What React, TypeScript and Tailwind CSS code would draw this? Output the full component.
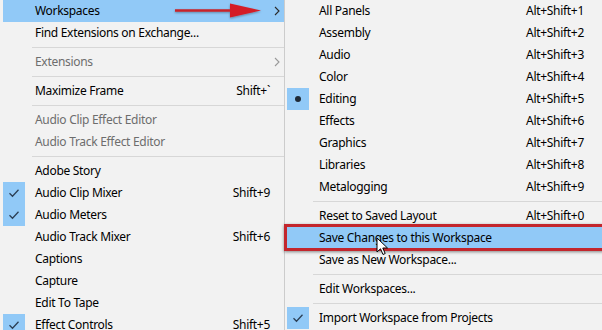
import React from "react";

type Item =
  | { sep: true }
  | {
      sep?: false;
      label: string;
      shortcut?: string;
      disabled?: boolean;
      check?: boolean;
      bullet?: boolean;
      sub?: boolean;
      hl?: boolean;
    };

const left: Item[] = [
  { label: "Workspaces", sub: true, hl: true },
  { label: "Find Extensions on Exchange..." },
  { sep: true },
  { label: "Extensions", sub: true, disabled: true },
  { sep: true },
  { label: "Maximize Frame", shortcut: "Shift+`" },
  { sep: true },
  { label: "Audio Clip Effect Editor", disabled: true },
  { label: "Audio Track Effect Editor", disabled: true },
  { sep: true },
  { label: "Adobe Story" },
  { label: "Audio Clip Mixer", shortcut: "Shift+9", check: true },
  { label: "Audio Meters", check: true },
  { label: "Audio Track Mixer", shortcut: "Shift+6" },
  { label: "Captions" },
  { label: "Capture" },
  { label: "Edit To Tape" },
  { label: "Effect Controls", shortcut: "Shift+5", check: true },
];

const right: Item[] = [
  { label: "All Panels", shortcut: "Alt+Shift+1" },
  { label: "Assembly", shortcut: "Alt+Shift+2" },
  { label: "Audio", shortcut: "Alt+Shift+3" },
  { label: "Color", shortcut: "Alt+Shift+4" },
  { label: "Editing", shortcut: "Alt+Shift+5", bullet: true },
  { label: "Effects", shortcut: "Alt+Shift+6" },
  { label: "Graphics", shortcut: "Alt+Shift+7" },
  { label: "Libraries", shortcut: "Alt+Shift+8" },
  { label: "Metalogging", shortcut: "Alt+Shift+9" },
  { sep: true },
  { label: "Reset to Saved Layout", shortcut: "Alt+Shift+0" },
  { label: "Save Changes to this Workspace", hl: true },
  { label: "Save as New Workspace..." },
  { sep: true },
  { label: "Edit Workspaces..." },
  { sep: true },
  { label: "Import Workspace from Projects", check: true },
];

function Check() {
  return (
    <svg width="12" height="10" viewBox="0 0 12 10">
      <path d="M1.5 5.2 L4.5 8.2 L10.5 1.8" fill="none" stroke="#2b3f55" strokeWidth="1.3" />
    </svg>
  );
}

function Chevron({ color }: { color: string }) {
  return (
    <svg width="6" height="10" viewBox="0 0 6 10">
      <path d="M1 1 L5 5 L1 9" fill="none" stroke={color} strokeWidth="1.1" />
    </svg>
  );
}

function Menu({ items, sepLeft, right }: { items: Item[]; sepLeft: string; right: boolean }) {
  return (
    <div className="flex flex-col">
      {items.map((it, i) =>
        it.sep ? (
          <div key={i} className="h-[7px] flex items-center">
            <div className={`${sepLeft} flex-1 h-px bg-[#d7d7d7]`} />
          </div>
        ) : (
          <div
            key={i}
            className={`h-[22px] flex items-center ${it.hl ? "bg-[#91c9f7]" : ""} ${
              it.disabled ? "text-[#6d6d6d]" : "text-[#000000]"
            }`}
          >
            <div
              className={`w-[22px] h-[22px] flex items-center justify-center ${
                it.check || it.bullet ? "bg-[#91c9f7]" : ""
              }`}
            >
              {it.check && <Check />}
              {it.bullet && <div className="w-[6px] h-[6px] rounded-full bg-[#1f2a36]" />}
            </div>
            <div className="pl-[10px] flex-1 whitespace-nowrap">{it.label}</div>
            {it.shortcut && <div className="whitespace-nowrap">{it.shortcut}</div>}
            {right ? (
              <div className="w-[18px]" />
            ) : (
              <div className="w-[14px] flex items-center justify-center">
                {it.sub && <Chevron color={it.disabled ? "#9a9a9a" : "#2a2a2a"} />}
              </div>
            )}
          </div>
        )
      )}
    </div>
  );
}

export default function App() {
  return (
    <div
      className="relative w-[602px] h-[330px] overflow-hidden bg-[#f2f2f2] flex text-[12px] leading-none tracking-[-0.3px]"
      style={{ fontFamily: '"Noto Sans", "Open Sans", sans-serif' }}
    >
      <div className="w-[284px] pl-[3px] shrink-0">
        <Menu items={left} sepLeft="ml-[29px]" right={false} />
      </div>
      <div className="flex-1 border-l border-[#cccccc] pl-[2px] bg-[#f2f2f2]">
        <Menu items={right} sepLeft="ml-[26px]" right={true} />
      </div>

      {/* red highlight frame */}
      <div className="absolute left-[284px] top-[224px] w-[330px] h-[27px] border-[3px] border-[#c3262d] shadow-[0_1px_3px_rgba(0,0,0,0.45)]" />

      {/* red arrow */}
      <svg className="absolute left-[170px] top-[0px]" width="100" height="22" viewBox="0 0 100 22">
        <defs>
          <filter id="sh" x="-10%" y="-30%" width="120%" height="160%">
            <feDropShadow dx="0" dy="1" stdDeviation="0.8" floodColor="#000" floodOpacity="0.35" />
          </filter>
        </defs>
        <g filter="url(#sh)">
          <path d="M5 9.3 L64 9.3 L64 11.7 L5 11.7 Z" fill="#c8202a" />
          <path d="M60 3.5 L91 10.5 L60 17.5 Z" fill="#d41f28" />
        </g>
      </svg>

      {/* mouse cursor */}
      <svg className="absolute left-[376px] top-[237px]" width="14" height="20" viewBox="0 0 14 20">
        <path
          d="M1 1 L1 15 L4.5 11.8 L7 17.5 L9.2 16.5 L6.8 11 L11.5 11 Z"
          fill="#ffffff"
          stroke="#000000"
          strokeWidth="1"
          strokeLinejoin="round"
        />
      </svg>
    </div>
  );
}
